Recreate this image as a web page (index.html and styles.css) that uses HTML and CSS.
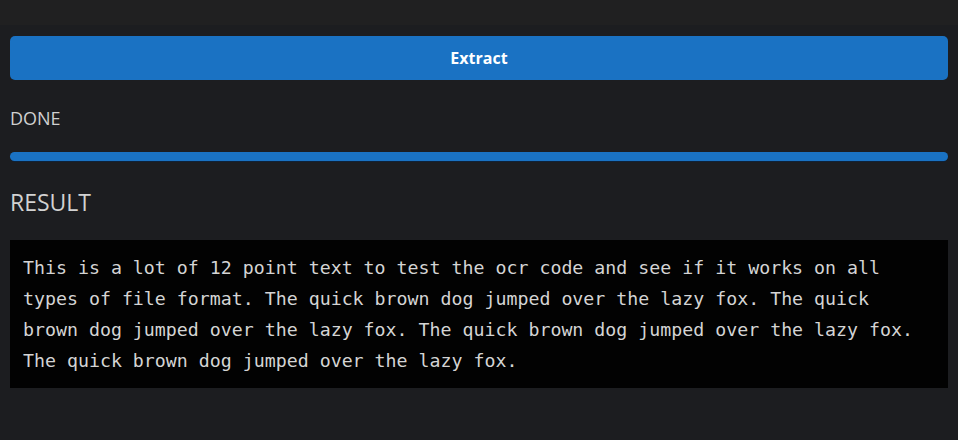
FILE: index.html
```html
<!DOCTYPE html>
<html>
<head>
<meta charset="utf-8">
<link rel="stylesheet" href="styles.css">
</head>
<body>
<div class="topbar"></div>
<main class="content">
  <button class="extract">Extract</button>
  <div class="status">DONE</div>
  <div class="progress"><div class="progress-fill"></div></div>
  <h2 class="result-title">RESULT</h2>
  <pre class="result-box">This is a lot of 12 point text to test the ocr code and see if it works on all types of file format. The quick brown dog jumped over the lazy fox. The quick brown dog jumped over the lazy fox. The quick brown dog jumped over the lazy fox. The quick brown dog jumped over the lazy fox.</pre>
</main>
</body>
</html>
```

FILE: styles.css
```css
html, body {
  margin: 0;
  padding: 0;
  background: #1c1d20;
  height: 100%;
}
body {
  font-family: "Open Sans", "Noto Sans", sans-serif;
  color: #cfcfcf;
}
.topbar {
  height: 25px;
  background: #202021;
}
.content {
  padding: 11px 10px 0 10px;
  display: flex;
  flex-direction: column;
}
.extract {
  height: 44px;
  border: none;
  border-radius: 5px;
  background: #1a72c3;
  color: #ffffff;
  font-family: "Open Sans", "Noto Sans", sans-serif;
  font-weight: 700;
  font-size: 16px;
  padding: 0;
}
.status {
  margin-top: 26px;
  font-size: 18px;
  line-height: 24px;
  color: #d0d0d0;
}
.progress {
  margin-top: 22px;
  height: 10px;
  border-radius: 5px;
  background: #0f2238;
}
.progress-fill {
  height: 9px;
  border-radius: 5px;
  background: #1a72c3;
}
.result-title {
  margin: 24px 0 0 0;
  font-weight: 400;
  font-size: 23px;
  line-height: 32px;
  color: #d2d2d2;
}
.result-box {
  margin: 22px 0 0 0;
  background: #020202;
  padding: 12px 30px 12px 13px;
  font-family: "DejaVu Sans Mono", "Liberation Mono", monospace;
  font-size: 18.25px;
  line-height: 31px;
  color: #d4d4d4;
  white-space: pre-wrap;
  word-wrap: break-word;
}
```
